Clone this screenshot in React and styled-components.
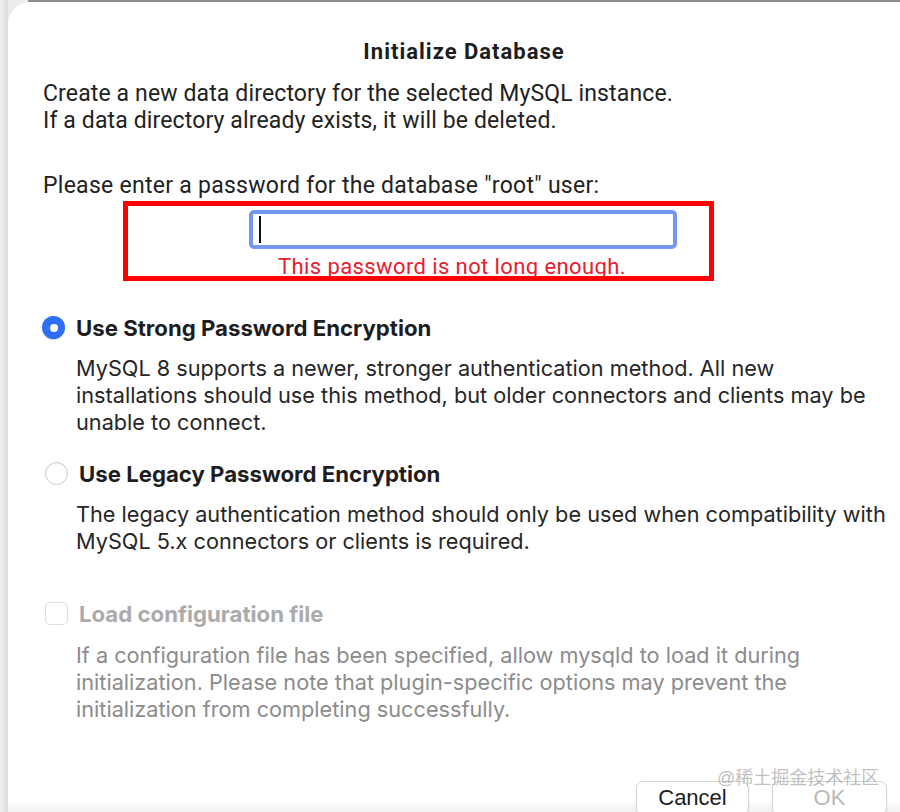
import React from "react";
import styled, { createGlobalStyle } from "styled-components";

const GlobalStyle = createGlobalStyle`
  html, body {
    margin: 0;
    padding: 0;
    background: #e8e8e8;
  }
  body {
    font-family: "Inter", "Liberation Sans", sans-serif;
    -webkit-font-smoothing: antialiased;
  }
`;

const Screen = styled.div`
  position: relative;
  width: 900px;
  height: 812px;
  overflow: hidden;
  box-sizing: border-box;
  padding-top: 2px;
  background: linear-gradient(to right, #efefef 0, #e3e3e3 6px, #d4d4d4 7px, #ececec 8px);
`;

const Dialog = styled.div`
  position: relative;
  margin-left: 8px;
  width: 912px;
  height: 810px;
  box-sizing: border-box;
  padding-top: 36px;
  border-top-left-radius: 22px;
  background: linear-gradient(to bottom, #fff 0, #fff 798px, #f1f1f1 810px);

  &::before {
    content: "";
    position: absolute;
    top: -2px;
    left: 20px;
    right: 0;
    height: 2px;
    background: #8d8d8d;
  }
`;

const Title = styled.h1`
  margin: 0;
  text-align: center;
  font-family: "Roboto", "Liberation Sans", sans-serif;
  font-size: 22px;
  font-weight: 700;
  letter-spacing: 1px;
  line-height: 27px;
  color: #1d1d1f;
`;

const Body = styled.div`
  padding-left: 35px;
  display: flex;
  flex-direction: column;
  align-items: flex-start;
`;

const Plain = styled.p`
  margin: ${({ $top }) => $top}px 0 0;
  font-family: "Roboto", "Liberation Sans", sans-serif;
  font-size: 23px;
  letter-spacing: ${({ $ls }) => $ls}px;
  line-height: 27px;
  color: #222;
  white-space: nowrap;
`;

const RedBox = styled.div`
  margin: 2px 0 0 80px;
  width: 591px;
  height: 80px;
  box-sizing: border-box;
  border: 5px solid #ff0000;
  padding-top: 4px;
  overflow: hidden;
`;

const Field = styled.div`
  margin-left: 121px;
  width: 428px;
  height: 39px;
  box-sizing: border-box;
  border: 4px solid #7398ee;
  border-radius: 5px;
  background: #fff;
  display: flex;
  align-items: center;
  padding-left: 6px;
`;

const Caret = styled.span`
  width: 2px;
  height: 27px;
  background: #111;
`;

const ErrorText = styled.div`
  margin: 7px 0 0 150px;
  font-family: "Roboto", "Liberation Sans", sans-serif;
  font-size: 22px;
  letter-spacing: 0.4px;
  line-height: 22px;
  color: #e6202e;
  white-space: nowrap;
`;

const OptionRow = styled.div`
  margin: ${({ $top }) => $top}px 0 0 ${({ $left }) => $left}px;
  height: 27px;
  display: flex;
  align-items: center;
  gap: 11px;
`;

const Radio = styled.span`
  flex: none;
  width: 23px;
  height: 23px;
  box-sizing: border-box;
  border-radius: 50%;
  display: flex;
  align-items: center;
  justify-content: center;
  background: ${({ $on }) => ($on ? "#2d6ef6" : "#fff")};
  border: ${({ $on }) => ($on ? "none" : "1px solid #c9c9c9")};
  box-shadow: ${({ $on }) =>
    $on ? "0 1px 1px rgba(0,0,0,0.15)" : "inset 0 1px 1px rgba(0,0,0,0.05)"};

  &::after {
    content: "";
    display: ${({ $on }) => ($on ? "block" : "none")};
    width: 8px;
    height: 8px;
    border-radius: 50%;
    background: #fff;
  }
`;

const Checkbox = styled.span`
  flex: none;
  width: 23px;
  height: 23px;
  box-sizing: border-box;
  border-radius: 5px;
  border: 1px solid #dedede;
  background: #fff;
`;

const Label = styled.span`
  font-size: 22.2px;
  font-weight: 700;
  line-height: 27px;
  color: ${({ $disabled }) => ($disabled ? "#ababab" : "#1d1d1f")};
  white-space: nowrap;
`;

const Desc = styled.p`
  margin: ${({ $top }) => $top}px 0 0 33px;
  font-size: 21.7px;
  line-height: 27px;
  color: ${({ $muted }) => ($muted ? "#8c8c8c" : "#262626")};
  white-space: nowrap;
`;

const ButtonBar = styled.div`
  margin-top: 58px;
  width: 844px;
  display: flex;
  justify-content: flex-end;
  gap: 23px;
`;

const Button = styled.button`
  width: ${({ $w }) => $w}px;
  height: 34px;
  box-sizing: border-box;
  padding: 0;
  border: 1px solid #d4d4d4;
  border-radius: 7px;
  background: #fff;
  box-shadow: 0 1px 2px rgba(0, 0, 0, 0.08);
  font-family: "Liberation Sans", "Inter", sans-serif;
  font-size: 22px;
  color: ${({ disabled }) => (disabled ? "#b9b9b9" : "#1d1d1f")};
`;

const Watermark = styled.div`
  position: absolute;
  left: 717px;
  top: 766px;
  font-family: "Liberation Sans", "Noto Sans CJK SC", sans-serif;
  font-size: 18px;
  line-height: 24px;
  color: rgba(140, 140, 140, 0.55);
  white-space: nowrap;
  pointer-events: none;
`;

export default function App() {
  return (
    <Screen>
      <GlobalStyle />
      <Dialog>
        <Title>Initialize Database</Title>
        <Body>
          <Plain $top={15} $ls={0.13}>
            Create a new data directory for the selected MySQL instance.
            <br />
            If a data directory already exists, it will be deleted.
          </Plain>
          <Plain $top={38} $ls={0.27}>
            Please enter a password for the database "root" user:
          </Plain>
          <RedBox>
            <Field>
              <Caret />
            </Field>
            <ErrorText>This password is not long enough.</ErrorText>
          </RedBox>

          <OptionRow $top={33} $left={-1}>
            <Radio $on />
            <Label>Use Strong Password Encryption</Label>
          </OptionRow>
          <Desc $top={14}>
            MySQL 8 supports a newer, stronger authentication method. All new
            <br />
            installations should use this method, but older connectors and clients may be
            <br />
            unable to connect.
          </Desc>

          <OptionRow $top={24} $left={2}>
            <Radio />
            <Label>Use Legacy Password Encryption</Label>
          </OptionRow>
          <Desc $top={14}>
            The legacy authentication method should only be used when compatibility with
            <br />
            MySQL 5.x connectors or clients is required.
          </Desc>

          <OptionRow $top={45} $left={2}>
            <Checkbox />
            <Label $disabled>Load configuration file</Label>
          </OptionRow>
          <Desc $top={15} $muted>
            If a configuration file has been specified, allow mysqld to load it during
            <br />
            initialization. Please note that plugin-specific options may prevent the
            <br />
            initialization from completing successfully.
          </Desc>

          <ButtonBar>
            <Button $w={113}>Cancel</Button>
            <Button $w={115} disabled>
              OK
            </Button>
          </ButtonBar>
        </Body>
      </Dialog>
      <Watermark>@稀土掘金技术社区</Watermark>
    </Screen>
  );
}
